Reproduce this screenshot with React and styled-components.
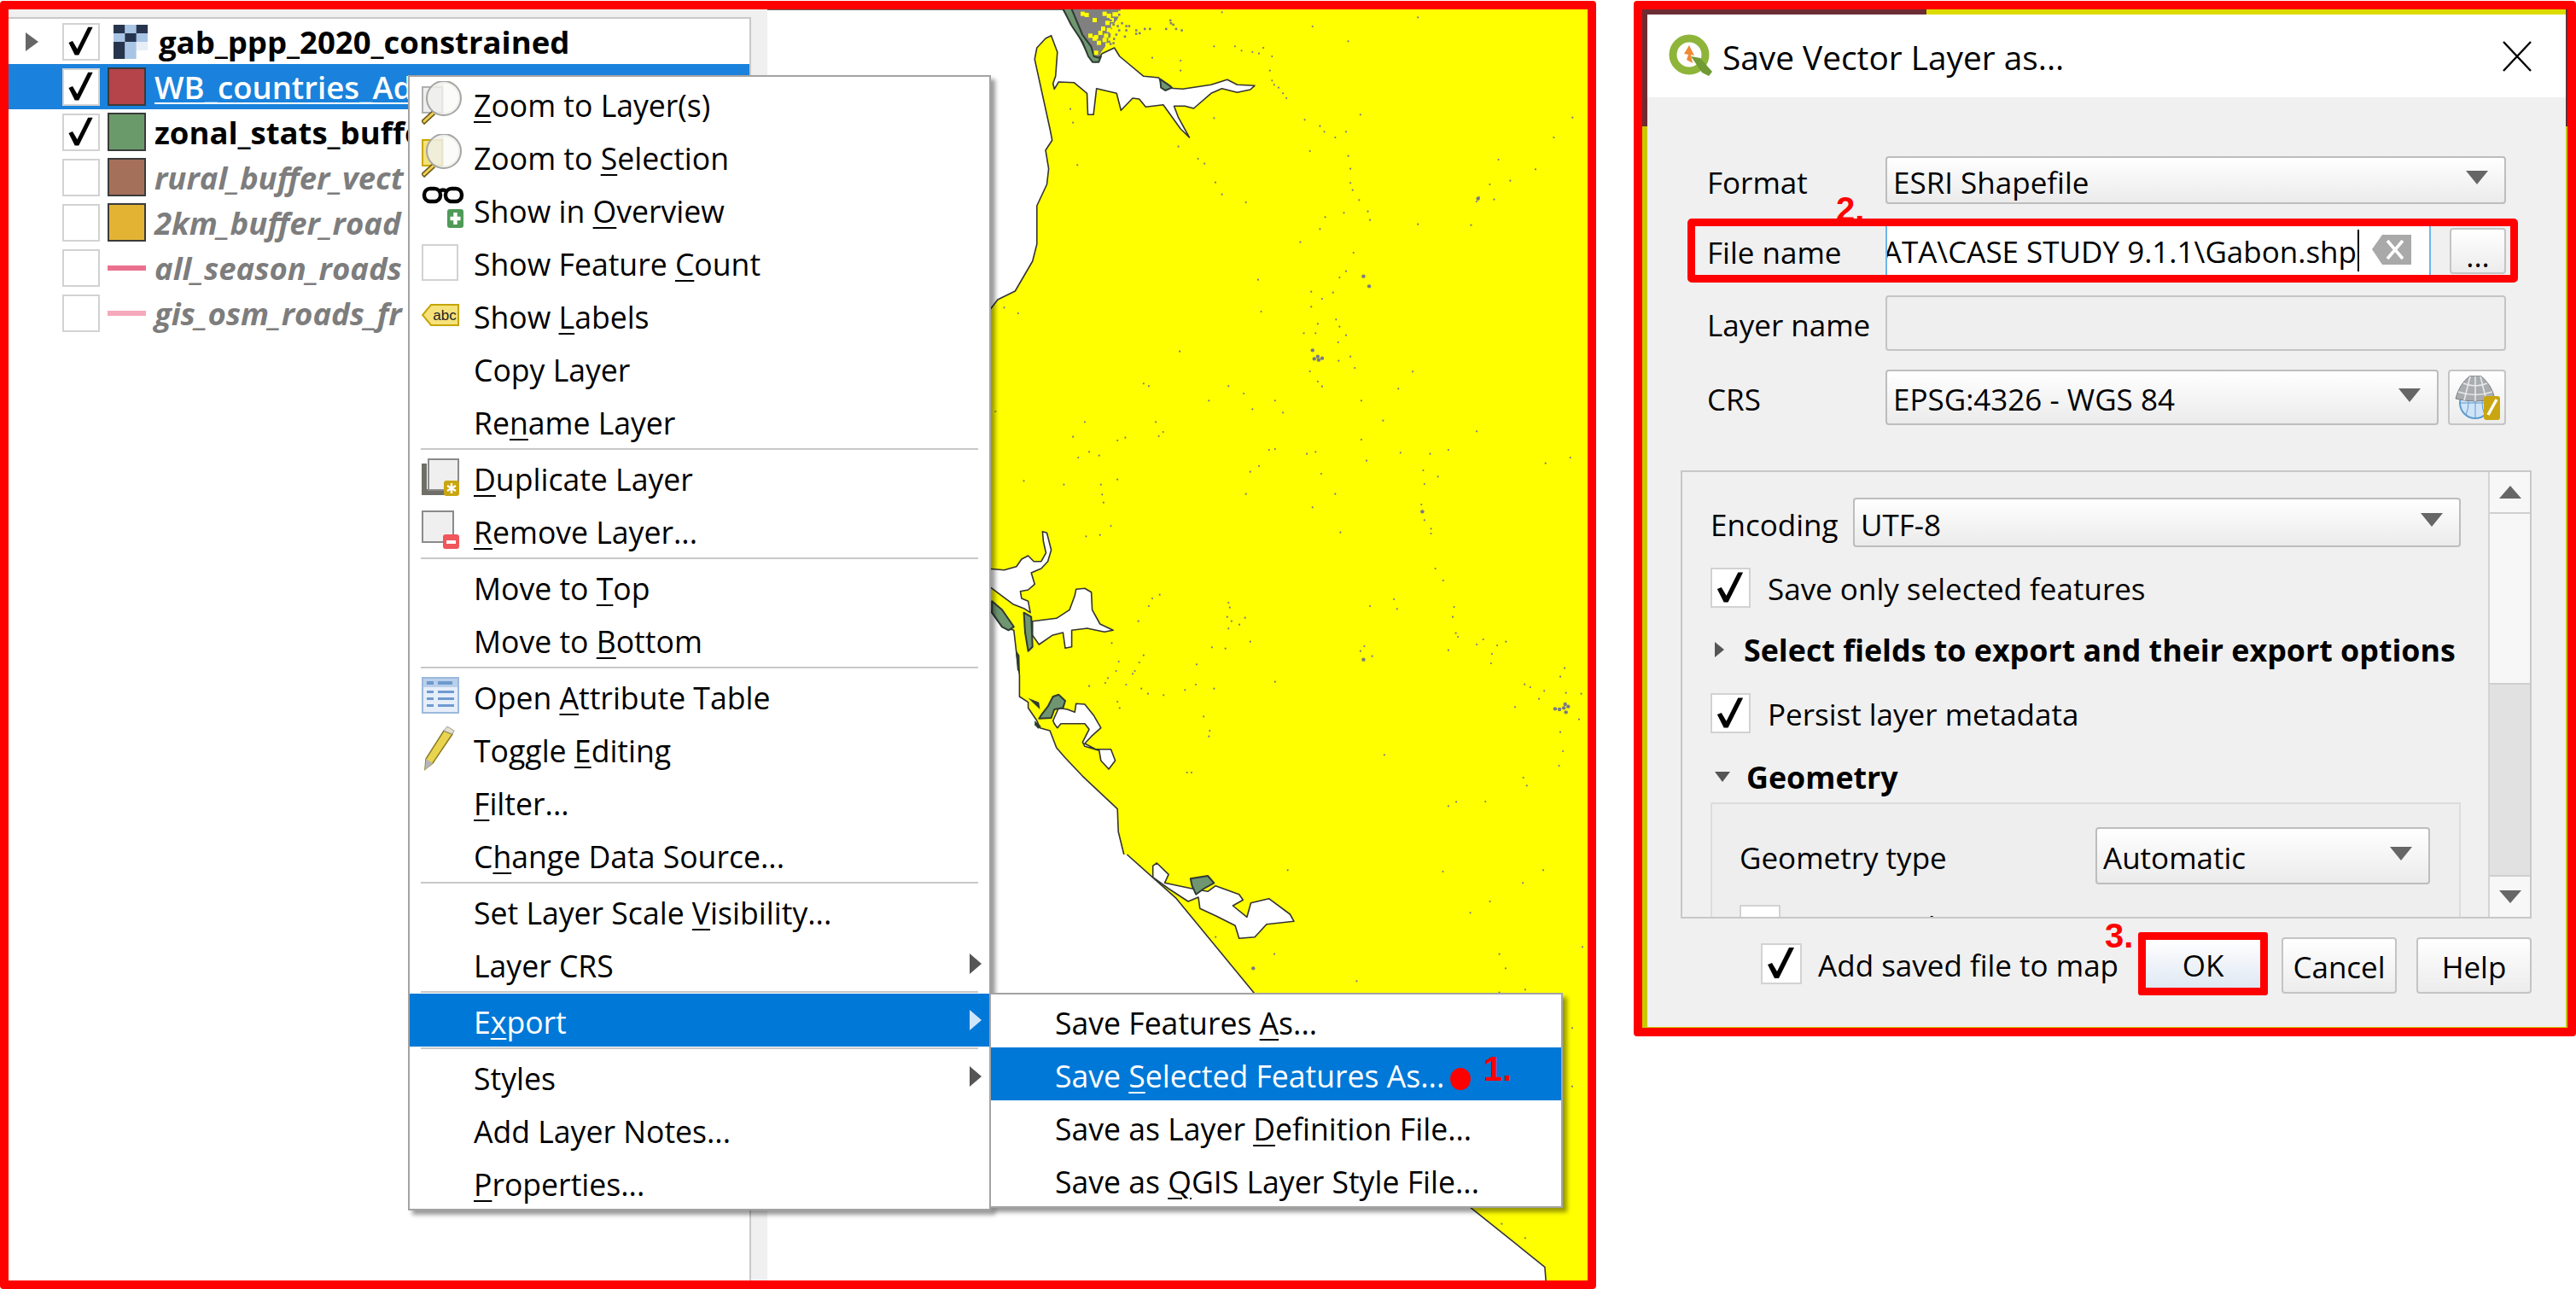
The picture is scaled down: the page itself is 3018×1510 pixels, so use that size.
import React from "react";
import styled, { createGlobalStyle } from "styled-components";

const UI_FONT = `"Open Sans", "Noto Sans", sans-serif`;

const GlobalStyle = createGlobalStyle`
  html, body { margin: 0; padding: 0; background: #fff; }
  body { font-family: ${UI_FONT}; color: #000; }
`;

const Page = styled.div`
  display: flex;
  align-items: flex-start;
  width: 3018px;
  height: 1510px;
  overflow: hidden;
  background: #fff;
`;

/* ---------- left panel ---------- */

const QgisFrame = styled.div`
  position: relative;
  box-sizing: border-box;
  display: flex;
  flex: none;
  width: 1870px;
  height: 1509px;
  margin-top: 1px;
  border: 10px solid #ff0000;
  border-radius: 4px;
`;

const TreeColumn = styled.div`
  display: flex;
  flex-direction: column;
  flex: none;
  width: 870px;
  padding-top: 9px;
  box-sizing: border-box;
  background: #f0f0f0;
`;

const TreeList = styled.div`
  flex: 1;
  background: #fff;
  border-top: 2px solid #c9c9c9;
  border-right: 2px solid #c9c9c9;
`;

const Splitter = styled.div`
  flex: none;
  width: 19px;
  background: #f0f0f0;
`;

const MapArea = styled.div`
  flex: 1;
  background: #fff;
  overflow: hidden;
  svg { display: block; }
`;

const TreeRow = styled.div`
  display: flex;
  align-items: center;
  height: 53px;
  padding-left: 63px;
  font-size: 36.5px;
  white-space: nowrap;
  overflow: hidden;
  background: ${(p) => (p.$selected ? "#1a82dc" : "transparent")};
  color: ${(p) => (p.$selected ? "#fff" : p.$off ? "#7d7d7d" : "#000")};
  font-weight: ${(p) => (p.$selected ? 600 : 700)};
  font-style: ${(p) => (p.$off ? "italic" : "normal")};
  text-decoration: ${(p) => (p.$selected ? "underline" : "none")};
  text-decoration-thickness: 2px;
  text-underline-offset: 4px;
`;

const TreeArrow = styled.span`
  position: relative;
  width: 0;
  height: 0;
  margin-left: -43px;
  margin-right: 28px;
  border-left: 15px solid #666;
  border-top: 11px solid transparent;
  border-bottom: 11px solid transparent;
`;

const Check = styled.span`
  display: inline-flex;
  align-items: center;
  justify-content: center;
  box-sizing: border-box;
  flex: none;
  width: ${(p) => p.$size || 44}px;
  height: ${(p) => p.$size || 44}px;
  background: #fff;
  border: 2px solid #d2d2d2;
`;

const Swatch = styled.span`
  flex: none;
  box-sizing: border-box;
  width: 45px;
  height: 45px;
  margin: 0 10px 0 9px;
  background: ${(p) => p.$color};
  border: 2px solid #3a3a3a;
`;

const LineSwatch = styled.span`
  flex: none;
  width: 45px;
  height: 6px;
  margin: 0 10px 0 9px;
  background: ${(p) => p.$color};
`;

const RasterWrap = styled.span`
  flex: none;
  display: inline-flex;
  margin: 0 13px 0 16px;
`;

/* ---------- context menu ---------- */

const Menu = styled.div`
  position: absolute;
  left: 468px;
  top: 77px;
  box-sizing: border-box;
  width: 683px;
  padding: 0;
  background: #fff;
  border: 2px solid #a3a3a3;
  box-shadow: 5px 5px 5px rgba(0, 0, 0, 0.4);
  font-size: 35.6px;
  z-index: 2;
`;

const SubMenu = styled(Menu)`
  left: 1149px;
  top: 1152px;
  width: 672px;
  z-index: 3;
`;

const MenuRow = styled.div`
  position: relative;
  display: flex;
  align-items: center;
  height: 62px;
  padding-left: ${(p) => (p.$sub ? 75 : 14)}px;
  white-space: nowrap;
  background: ${(p) => (p.$active ? "#0078d7" : "transparent")};
  color: ${(p) => (p.$active ? "#fff" : "#000")};
`;

const MenuIcon = styled.span`
  flex: none;
  display: inline-flex;
  align-items: center;
  width: 61px;
  height: 62px;
`;

const MenuText = styled.span`
  padding-top: 3px;
`;

const MenuSeparator = styled.div`
  height: 2px;
  margin: 1px 13px;
  background: #c8c8c8;
`;

const Mnemonic = styled.span`
  text-decoration: underline;
  text-decoration-thickness: 2px;
  text-underline-offset: 5px;
`;

const SubArrow = styled.span`
  position: absolute;
  right: 9px;
  top: 19px;
  width: 0;
  height: 0;
  border-left: 14px solid ${(p) => (p.$active ? "#cfe6fa" : "#555")};
  border-top: 12px solid transparent;
  border-bottom: 12px solid transparent;
`;

const RedDot = styled.span`
  position: absolute;
  left: 538px;
  top: 24px;
  width: 24px;
  height: 26px;
  border-radius: 50%;
  background: #ff0000;
`;

const StepNumber = styled.span`
  position: absolute;
  left: ${(p) => p.$x}px;
  top: ${(p) => p.$y}px;
  font-family: "Liberation Sans", Arial, sans-serif;
  font-weight: 700;
  font-size: 40px;
  line-height: 40px;
  letter-spacing: 0;
  color: #ff0000;
  z-index: 4;
`;

/* ---------- dialog ---------- */

const DialogFrame = styled.div`
  box-sizing: border-box;
  display: flex;
  flex-direction: column;
  flex: none;
  width: 1104px;
  height: 1213px;
  margin: 1px 0 0 44px;
  padding: 0 2px 0 0;
  border: 10px solid #ff0000;
  border-radius: 4px;
  background: linear-gradient(#6b2d33 0 137px, #c9c900 137px);
`;

const TopStrip = styled.div`
  flex: none;
  height: 6px;
  background: linear-gradient(90deg, #6b2d33 0 333px, #dcdc00 333px);
  border-bottom: 0;
`;

const DialogWindow = styled.div`
  flex: 1;
  display: flex;
  flex-direction: column;
  margin-left: 6px;
  margin-bottom: 1px;
  font-size: 35px;
  background: #f0f0f0;
`;

const TitleBar = styled.div`
  flex: none;
  display: flex;
  align-items: center;
  height: 97px;
  padding: 0 40px 0 24px;
  background: #fff;
`;

const TitleText = styled.span`
  flex: 1;
  margin-left: 11px;
  margin-top: 2px;
  font-size: 38.8px;
`;

const FormRow = styled.div`
  display: flex;
  align-items: center;
  height: ${(p) => p.$h}px;
  margin: ${(p) => p.$top}px 70px 0 70px;
`;

const FieldLabel = styled.span`
  flex: none;
  width: ${(p) => p.$w || 209}px;
  padding-top: 4px;
`;

const FileBox = styled.div`
  position: relative;
  box-sizing: border-box;
  display: flex;
  align-items: stretch;
  height: 75px;
  margin: 17px 56px 0 47px;
  padding: 0 5px 0 14px;
  border: 9px solid #ff0000;
  border-radius: 5px;
`;

const FileLabel = styled(FieldLabel)`
  align-self: center;
`;

const FileInput = styled.div`
  display: flex;
  align-items: center;
  justify-content: flex-end;
  box-sizing: border-box;
  flex: none;
  width: 639px;
  padding-right: 82px;
  overflow: hidden;
  white-space: nowrap;
  position: relative;
  background: #fff;
  border-left: 2px solid #6cb6ea;
  border-right: 2px solid #6cb6ea;
`;

const FileText = styled.span`
  flex: none;
  border-right: 2px solid #000;
  padding-right: 1px;
  padding-top: 2px;
`;

const ClearIcon = styled.span`
  position: absolute;
  right: 21px;
  top: 9px;
  display: inline-flex;
`;

const Combo = styled.div`
  box-sizing: border-box;
  display: flex;
  align-items: center;
  justify-content: space-between;
  flex: 1;
  height: 100%;
  padding: 4px 19px 0 7px;
  border: 2px solid #bdbdbd;
  border-radius: 4px;
  background: linear-gradient(#ffffff, #ebebeb);
  white-space: nowrap;
`;

const ComboArrow = styled.span`
  flex: none;
  width: 0;
  height: 0;
  margin-top: -10px;
  border-top: 16px solid #666;
  border-left: 13px solid transparent;
  border-right: 13px solid transparent;
`;

const TextBox = styled.div`
  flex: 1;
  box-sizing: border-box;
  height: 100%;
  border: 2px solid #c4c4c4;
  border-radius: 4px;
  background: #efefef;
`;

const SquareButton = styled.div`
  box-sizing: border-box;
  display: flex;
  align-items: ${(p) => (p.$dots ? "flex-end" : "center")};
  justify-content: center;
  flex: none;
  width: ${(p) => p.$w}px;
  height: ${(p) => p.$h || "100%"};
  margin-left: ${(p) => p.$ml}px;
  align-self: center;
  border: 2px solid #c4c4c4;
  border-radius: 4px;
  background: linear-gradient(#ffffff, #ececec);
  line-height: 30px;
  padding-bottom: ${(p) => (p.$dots ? 4 : 0)}px;
`;

const ScrollBox = styled.div`
  flex: none;
  box-sizing: border-box;
  display: flex;
  width: 997px;
  height: 525px;
  margin: 53px 0 0 39px;
  border: 2px solid #c8c8c8;
  overflow: hidden;
`;

const ScrollContent = styled.div`
  flex: 1;
  height: 1000px;
  padding: 30px 32px 0 33px;
`;

const FlowRow = styled.div`
  display: flex;
  align-items: center;
  height: ${(p) => p.$h}px;
  margin-top: ${(p) => p.$top || 0}px;
`;

const CheckLabel = styled.span`
  margin-left: ${(p) => p.$gap || 20}px;
  padding-top: 2px;
  white-space: nowrap;
`;

const SectionTitle = styled.span`
  margin-left: ${(p) => p.$gap}px;
  font-weight: 700;
  font-size: 35.8px;
  white-space: nowrap;
`;

const Caret = styled.span`
  flex: none;
  width: 0;
  height: 0;
  margin-left: 5px;
  ${(p) =>
    p.$open
      ? `
    border-top: 12px solid #555;
    border-left: 9px solid transparent;
    border-right: 9px solid transparent;
  `
      : `
    border-left: 11px solid #555;
    border-top: 9px solid transparent;
    border-bottom: 9px solid transparent;
    margin-right: 2px;
  `}
`;

const GroupBox = styled.div`
  box-sizing: border-box;
  height: 400px;
  margin-top: 5px;
  padding: 27px 34px 0 32px;
  border: 2px solid #dcdcdc;
  background: #eeeeee;
`;

const ScrollBar = styled.div`
  flex: none;
  display: flex;
  flex-direction: column;
  width: 47px;
  border-left: 2px solid #d4d4d4;
  background: #e1e1e1;
`;

const ScrollButton = styled.div`
  flex: none;
  display: flex;
  align-items: center;
  justify-content: center;
  height: 47px;
  background: #f7f7f7;
  border-${(p) => (p.$down ? "top" : "bottom")}: 2px solid #cfcfcf;
`;

const ScrollTriangle = styled.span`
  width: 0;
  height: 0;
  border-left: 13px solid transparent;
  border-right: 13px solid transparent;
  border-${(p) => (p.$down ? "top" : "bottom")}: 15px solid #666;
`;

const ScrollThumb = styled.div`
  flex: none;
  height: 198px;
  background: #f7f7f7;
  border-bottom: 2px solid #cfcfcf;
`;

const ScrollTrack = styled.div`
  flex: 1;
`;

const ButtonBar = styled.div`
  flex: none;
  display: flex;
  align-items: center;
  justify-content: flex-end;
  height: 74px;
  margin-top: 16px;
  padding-right: 40px;
`;

const DialogButton = styled.div`
  box-sizing: border-box;
  display: flex;
  align-items: center;
  justify-content: center;
  flex: none;
  width: 135px;
  height: 66px;
  margin-left: ${(p) => p.$ml}px;
  margin-top: 4px;
  padding-top: 3px;
  border: 2px solid #c4c4c4;
  border-radius: 4px;
  background: linear-gradient(#ffffff, #ececec);
`;

const OkButton = styled.div`
  position: relative;
  box-sizing: border-box;
  display: flex;
  align-items: center;
  justify-content: center;
  flex: none;
  width: 152px;
  height: 74px;
  margin-left: 23px;
  padding-top: 3px;
  border: 9px solid #ff0000;
  border-radius: 3px;
  background: linear-gradient(#ffffff, #dfe8f3);
`;

/* ---------- drawings ---------- */

const CheckMark = ({ size = 44 }) => (
  <svg width={size} height={size} viewBox="0 0 44 44">
    <path d="M6 23 L11 21 L17 31 L31 3 L37 3 L19 39 L14 39 Z" fill="#000" />
  </svg>
);

const Raster = () => {
  const dark = "#27344d";
  const light = "#a9c5e6";
  const cells = [
    [dark, light, dark],
    [light, dark, light],
    [dark, light, "#e8eef6"],
    [dark, light, "#ffffff"],
  ];
  return (
    <svg width="40" height="40" viewBox="0 0 3 4" preserveAspectRatio="none">
      {cells.map((row, r) =>
        row.map((c, i) => <rect key={`${r}-${i}`} x={i} y={r} width="1.02" height="1.02" fill={c} />)
      )}
    </svg>
  );
};

const Magnifier = ({ page }) => (
  <svg width="48" height="52" viewBox="0 0 48 52">
    <rect x="1" y="7" width="23" height="30" fill={page} stroke={page === "#f5e27a" ? "#c9a800" : "#b0b0b0"} strokeWidth="2" />
    <path d="M14 37 L1 49" stroke="#6b5a1e" strokeWidth="6" />
    <path d="M14 37 L2 48" stroke="#f0d050" strokeWidth="3" />
    <circle cx="26" cy="20" r="20" fill="#eeeeea" fillOpacity="0.85" stroke="#a5a5a5" strokeWidth="2" />
    <path d="M26 3 A17 17 0 0 1 26 37 Z" fill="#fff" fillOpacity="0.7" />
  </svg>
);

const Glasses = () => (
  <svg width="50" height="54" viewBox="0 0 50 54">
    <g fill="none" stroke="#000" strokeWidth="4.4">
      <rect x="3" y="3" width="19" height="15" rx="7" />
      <rect x="28" y="3" width="19" height="15" rx="7" />
      <path d="M21 6 Q25 3 29 6" />
    </g>
    <rect x="30" y="27" width="19" height="22" rx="3" fill="#4f9a58" />
    <path d="M39.5 31 V45 M33.5 38 H45.5" stroke="#fff" strokeWidth="4.4" />
  </svg>
);

const EmptyBox = () => <Check $size={43} />;

const LabelTag = () => (
  <svg width="44" height="26" viewBox="0 0 44 26">
    <path d="M11 1 H43 V25 H11 L1 13 Z" fill="#f6e27a" stroke="#c5a400" strokeWidth="2" />
    <text x="27" y="19" textAnchor="middle" fontFamily="'Liberation Sans', sans-serif" fontSize="17" fill="#222">abc</text>
  </svg>
);

const Duplicate = () => (
  <svg width="44" height="44" viewBox="0 0 44 44">
    <path d="M0 6 H6 V36 H36 V43 H0 Z" fill="#6f6f68" />
    <rect x="8" y="1" width="35" height="36" fill="#efefef" stroke="#8a8a8a" strokeWidth="2" />
    <rect x="26" y="26" width="18" height="18" rx="3" fill="#c9a610" />
    <path d="M35 29 V41 M30 32 L40 38 M40 32 L30 38" stroke="#fff" strokeWidth="2.4" />
  </svg>
);

const Remove = () => (
  <svg width="44" height="46" viewBox="0 0 44 46">
    <rect x="1" y="1" width="36" height="36" fill="#efefef" stroke="#8a8a8a" strokeWidth="2" />
    <rect x="25" y="28" width="19" height="17" rx="3" fill="#f0565c" />
    <rect x="29" y="35" width="11" height="4" fill="#fff" />
  </svg>
);

const TableIcon = () => (
  <svg width="44" height="44" viewBox="0 0 44 44">
    <rect x="1" y="1" width="42" height="41" fill="#e6eefa" stroke="#9cb9dd" strokeWidth="2" />
    <rect x="2" y="2" width="40" height="10" fill="#b9cfea" />
    <g fill="#6f9ad0">
      <rect x="6" y="5" width="8" height="4" />
      <rect x="19" y="5" width="17" height="4" />
      <rect x="6" y="16" width="8" height="3" />
      <rect x="19" y="16" width="19" height="3" />
      <rect x="6" y="24" width="8" height="3" />
      <rect x="19" y="24" width="19" height="3" />
      <rect x="6" y="32" width="8" height="3" />
      <rect x="19" y="32" width="19" height="3" />
    </g>
  </svg>
);

const Pencil = () => (
  <svg width="44" height="52" viewBox="0 0 44 52">
    <path d="M26 5 L36 9 L13 43 L4 50 L5 38 Z" fill="#e8d44f" stroke="#8a7a20" strokeWidth="1.5" />
    <path d="M26 5 L30 0 L38 5 L36 9 Z" fill="#e4e0c8" stroke="#999" />
    <path d="M5 38 L13 43 L4 51 Z" fill="#b5b5b5" />
  </svg>
);

const QgisLogo = () => (
  <svg width="53" height="51" viewBox="0 0 53 51">
    <circle cx="25" cy="24" r="19" fill="none" stroke="#8eb53a" strokeWidth="9" />
    <path d="M27 26 L40 45 L48 49 L52 44 L38 28 Z" fill="#6f9a34" />
    <path d="M25 13 L31 25 L27 24 L29 34 L22 30 L24 24 L19 23 Z" fill="#ee8a35" />
  </svg>
);

const CloseX = () => (
  <svg width="34" height="36" viewBox="0 0 34 36">
    <path d="M1 1 L33 35 M33 1 L1 35" stroke="#000" strokeWidth="2.4" />
  </svg>
);

const ClearGlyph = () => (
  <svg width="46" height="37" viewBox="0 0 46 37">
    <path d="M12 1 H46 V36 H12 L0 18 Z" fill="#a9a9a9" />
    <path d="M18 8 L36 29 M36 8 L18 29" stroke="#fff" strokeWidth="3.6" />
  </svg>
);

const GlobeIcon = () => (
  <svg width="54" height="52" viewBox="0 0 54 52">
    <circle cx="25" cy="32" r="18" fill="#cfe4f7" stroke="#5f9bd0" strokeWidth="2" />
    <path d="M7 32 H43 M25 14 V50 M14 18 Q20 32 14 46 M36 18 Q30 32 36 46" stroke="#5f9bd0" fill="none" />
    <path d="M2 27 Q6 10 19 0 H31 Q44 10 48 27 Q25 33 2 27 Z" fill="#a9adb0" stroke="#7c7f82" />
    <path d="M19 1 L12 29 M31 1 L38 29 M25 1 V30 M5 19 Q25 26 45 19 M11 9 Q25 15 39 9" stroke="#e8e8e8" strokeWidth="1.6" fill="none" />
    <rect x="35" y="24" width="19" height="28" rx="3" fill="#c9a610" />
    <path d="M40 46 L50 28" stroke="#fff" strokeWidth="3.4" />
  </svg>
);

/* zoom-crop coordinates of the coast, mapped back to the page */
const z6 = ([X, Y]) => [1100 + X / 1.96, Y / 3];
const z7 = ([X, Y]) => [1100 + X / 1.96, 500 + Y / 3];
const z3 = ([X, Y]) => [460 + X / 1.089, 1000 + Y / 3];
const z8 = ([X, Y]) => [1200 + X / 3, 10 + Y / 3];
const pts = (map, list) => list.map((p) => map(p).map((n) => n.toFixed(1)).join(",")).join(" ");
const rows = (flat) => {
  const out = [];
  for (let i = 0; i < flat.length; i += 2) out.push([flat[i], flat[i + 1]]);
  return out;
};

const SEA_NORTH = rows([
  285,30, 320,120, 345,195, 360,215, 375,185, 403,165, 415,195, 470,265, 505,270, 515,305, 560,310, 625,295, 662,277,
  685,295, 725,298, 715,312, 685,322, 650,308, 625,325, 585,378, 565,370, 540,370, 550,410, 575,480, 555,450, 515,365,
  475,373, 460,345, 445,342, 418,385, 408,325, 362,308, 355,400, 342,400, 340,325, 310,287, 275,285, 265,310, 262,290,
  268,265, 272,180, 258,122, 245,132, 225,165, 220,205, 255,450, 260,490, 245,525, 252,590, 248,645, 225,720, 225,855,
  215,915, 175,1020, 135,1050, 110,1100, -420,1100, -420,30,
]);

const SEA_WEST = rows([
  110,495, 150,500, 178,488, 190,462, 205,450, 218,470, 235,470, 246,440, 240,400, 238,365, 248,370, 258,430, 250,470,
  235,495, 212,510, 220,550, 205,570, 187,575, 190,600, 205,610, 210,650, 195,635, 170,620, 122,565, 110,555,
]);

const LAGOON_MID = rows([
  215,680, 270,670, 300,640, 312,590, 315,568, 335,565, 350,578, 352,640, 370,690, 400,712, 380,718, 340,705, 305,712,
  305,770, 290,775, 285,720, 260,730, 230,762, 215,730,
]);

const COAST_SOUTH = rows([
  110,620, 122,650, 145,700, 172,712, 178,790, 185,870, 185,945, 205,965, 205,985, 225,1030, 232,1055, 255,1065,
  270,1125, 290,1160, 330,1225, 410,1340, 412,1420, 425,1500, -420,1500, -420,620,
]);

const LAGOON_SOUTH = rows([
  265,1040, 262,1030, 275,985, 295,990, 312,1000, 315,970, 335,972, 355,1010, 372,1055, 350,1085, 335,1110, 360,1130,
  395,1130, 405,1170, 390,1200, 372,1170, 368,1135, 335,1120, 330,1105, 345,1060, 335,1040, 280,1040, 272,1055,
]);

const COAST_LOW = rows([
  937,0, 1000,155, 1100,490, 1375,1240, 1470,1450, 1472,1520, 300,1520, 300,0,
]);

const LAGOON_LOW = rows([
  975,30, 990,70, 985,100, 1020,120, 1040,130, 1050,110, 1080,140, 1085,160, 1072,180, 1090,220, 1095,170, 1118,155,
  1145,210, 1150,235, 1115,245, 1100,290, 1080,295, 1075,250, 1050,215, 1030,190, 1028,150, 1015,165, 990,120, 970,80, 970,40,
]);

const DOTS_A = rows([
  650,40, 1100,58, 858,90, 940,142, 632,160, 680,160, 745,165, 695,175, 720,180, 735,185, 765,195, 555,210, 555,245, 760,245,
  490,200, 765,280, 770,295, 780,305, 790,325, 798,342, 840,418, 875,440, 885,460, 910,480, 935,460, 968,400, 1455,410, 1412,480,
  550,512, 852,528, 940,545, 945,590, 595,555, 610,572, 318,577, 1285,558, 1370,592, 1312,632, 1265,645, 1240,690, 1235,705,
  1275,698, 635,638, 650,680, 705,708, 945,640, 950,665, 965,700, 985,740, 990,770, 887,760, 930,745, 875,802, 830,848, 1100,785,
  1222,788, 952,885, 935,950, 920,972, 733,980, 975,968, 988,1003, 855,1022, 880,1047, 905,1025, 855,1075, 740,1092, 150,1078,
  182,1098, 870,1135, 912,1120, 920,1145, 838,1168, 865,1168, 935,1175, 917,1200, 553,1232, 945,1250, 918,1265, 955,1290, 852,1302,
  1088,1303, 870,1338, 880,1355, 470,1345, 482,1354, 665,1354, 1055,1363, 700,1380, 620,1405, 772,1405, 970,1405, 720,1435, 790,1447,
  130,1443, 335,1480, 498,1480, 1020,1475, 302,380, 308,428, 632,412,
]);

const DOTS_B = rows([
  308,32, 410,45, 428,35, 515,15, 505,30, 970,42, 1235,13, 345,85, 320,105, 368,98, 758,78, 772,75, 845,92, 865,85, 1060,88, 1128,92,
  1170,78, 1393,125, 1450,105, 982,116, 715,155, 735,135, 878,162, 1112,150, 1146,172, 410,182, 195,187, 287,200, 372,200, 1115,198,
  375,235, 705,233, 910,233, 378,263, 858,280, 1112,295, 1108,270, 1115,325, 395,345, 1130,355, 1130,372, 922,368, 370,377, 338,382,
  1140,495, 1158,537, 490,600, 507,587, 665,615, 668,632, 482,627, 990,627, 1045,603, 1052,637, 1183,630, 1180,665, 662,665, 672,680,
  690,692, 703,668, 665,706, 458,680, 397,757, 715,752, 1187,722, 1192,735, 1250,744, 1235,762, 1282,765, 1302,752, 627,772, 658,776,
  977,768, 968,785, 975,815, 995,803, 1170,782, 1270,795, 1268,828, 470,800, 460,825, 413,822, 592,832, 407,855, 450,855, 445,865,
  1437,845, 1427,875, 388,880, 772,893, 382,897, 345,908, 430,903, 590,903, 1345,902, 1358,912, 465,917, 632,917, 565,922, 480,935,
  516,940, 1390,925, 1440,932, 1475,935, 1378,953, 410,963, 415,985, 1323,982, 608,1015, 1470,1025, 622,1065, 620,1085, 1427,1070,
  1433,1137, 1023,1150, 1424,1188, 570,1212, 580,1212, 1342,1230, 1350,1258, 1188,1315, 1170,1330, 1255,1314,
]);

const DOTS_C = rows([
  1340,60, 1442,100, 1468,55, 1142,55, 1400,165, 1375,205, 1518,325, 1125,350, 1412,350, 1098,400, 1420,400, 1230,445, 1445,475,
  1412,485, 1505,610, 1505,815, 1050,290, 1415,1298, 1445,1348,
]);

const BLOBS = [
  ...[[870,1250],[862,1258],[880,1256],[858,1228],[872,1262]].map(z6),
  ...[[988,1003],[975,968],[1238,695]].map(z6),
  ...[[1435,985],[1425,990],[1445,980],[1440,1000],[1415,988],[1438,972],[975,815],[1110,295]].map(z7),
  ...[[1098,400]].map(z3),
];

const HILLS_GREY = rows([
  165,-5, 340,-5, 335,20, 310,60, 300,110, 270,150, 262,170, 245,165, 235,130, 205,90,
]);

const HILLS_YELLOW = rows([
  198,8, 212,12, 240,30, 275,8, 290,15, 225,85, 240,95, 260,75, 280,85, 300,70, 295,100, 245,145, 275,100, 310,10, 320,10, 300,30,
  285,40, 322,42, 315,60, 305,50, 270,60, 290,65, 330,5, 255,110, 285,118, 245,90,
]);

const HILLS_SPECKS = rows([
  300,35, 320,30, 330,15, 310,50, 325,55, 340,45, 355,55, 365,55, 330,70, 355,70, 390,70, 420,65, 438,65, 495,65, 510,35, 520,50,
  530,65, 550,70, 390,82, 402,80, 350,92, 295,110, 312,100, 320,85, 512,45, 300,118, 310,115,
]);

const COAST_STROKE = "#333";

const GabonMap = () => (
  <svg width="961" height="1489" viewBox="899 10 961 1489">
    <rect x="899" y="10" width="961" height="1489" fill="#ffff00" />
    <polygon points={pts(z7, COAST_SOUTH)} fill="#fff" />
    <polygon points={pts(z3, COAST_LOW)} fill="#fff" />
    <g stroke={COAST_STROKE} strokeWidth="1.6" strokeLinejoin="round">
      <polygon points={pts(z6, SEA_NORTH)} fill="#fff" />
      <polygon points={pts(z7, SEA_WEST)} fill="#fff" />
      <polygon points={pts(z7, LAGOON_MID)} fill="#fff" />
      <polyline points={pts(z7, COAST_SOUTH.slice(0, -2))} fill="none" />
      <polygon points={pts(z7, LAGOON_SOUTH)} fill="#fff" />
      <polyline points={pts(z3, COAST_LOW.slice(0, -2))} fill="none" />
      <polygon points={pts(z3, LAGOON_LOW)} fill="#fff" />
    </g>
    <polygon points={pts(z8, HILLS_GREY)} fill="#808080" />
    <g fill="#6f9670" stroke="#2f3a33" strokeWidth="2" strokeLinejoin="round">
      <polygon points={pts(z8, [[135,-5],[165,-5],[205,90],[235,130],[245,165],[262,170],[270,165],[262,185],[240,185],[225,165],[205,115],[165,55]])} />
      <polygon points={pts(z6, [[508,275],[530,298],[535,305],[520,315],[510,305]])} />
      <polygon points={pts(z7, [[122,610],[145,640],[172,700],[160,712],[145,700],[122,650]])} />
      <polygon points={pts(z7, [[195,650],[212,665],[215,770],[205,785],[198,720]])} />
      <polygon points={pts(z7, [[262,945],[275,938],[290,960],[285,985],[265,990],[258,1020],[230,1022],[235,1010],[250,980]])} />
      <polygon points={pts(z3, [[1018,85],[1040,75],[1048,100],[1035,120],[1025,140],[1020,110]])} />
    </g>
    <g fill="#2f3a33">
      <polygon points={pts(z7, [[176,780],[185,800],[186,868],[180,850]])} />
      <polygon points={pts(z7, [[205,950],[230,965],[232,990],[215,965]])} />
      <polygon points={pts(z7, [[220,1030],[235,1050],[228,1058],[220,1045]])} />
    </g>
    <g fill="#ffff00">
      {HILLS_YELLOW.map(z8).map(([x, y], i) => <rect key={i} x={x} y={y} width="5" height="5" />)}
    </g>
    <g fill="#7a7a86">
      {HILLS_SPECKS.map(z8).map(([x, y], i) => <rect key={i} x={x} y={y} width="2.5" height="2.5" />)}
      {DOTS_A.map(z6).map(([x, y], i) => <circle key={`a${i}`} cx={x} cy={y} r="1.1" />)}
      {DOTS_B.map(z7).map(([x, y], i) => <circle key={`b${i}`} cx={x} cy={y} r="1.1" />)}
      {DOTS_C.map(z3).map(([x, y], i) => <circle key={`c${i}`} cx={x} cy={y} r="1.1" />)}
      {BLOBS.map(([x, y], i) => <circle key={`d${i}`} cx={x} cy={y} r="2.2" />)}
    </g>
  </svg>
);

/* ---------- data ---------- */

const LAYERS = [
  { name: "gab_ppp_2020_constrained", on: true, raster: true, arrow: true },
  { name: "WB_countries_Ad", on: true, color: "#b5434a", selected: true },
  { name: "zonal_stats_buffe", on: true, color: "#6b9a6a" },
  { name: "rural_buffer_vect", color: "#a5705a", off: true },
  { name: "2km_buffer_road", color: "#e3b334", off: true },
  { name: "all_season_roads", line: "#e9718f", off: true },
  { name: "gis_osm_roads_fr", line: "#f5a9bb", off: true },
];

const sep = { separator: true };

const MENU = [
  { label: "_Zoom to Layer(s)", icon: <Magnifier page="#eeeeee" /> },
  { label: "Zoom to _Selection", icon: <Magnifier page="#f5e27a" /> },
  { label: "Show in _Overview", icon: <Glasses /> },
  { label: "Show Feature _Count", icon: <EmptyBox /> },
  { label: "Show _Labels", icon: <LabelTag /> },
  { label: "Copy Layer" },
  { label: "Re_name Layer" },
  sep,
  { label: "_Duplicate Layer", icon: <Duplicate /> },
  { label: "_Remove Layer...", icon: <Remove /> },
  sep,
  { label: "Move to _Top" },
  { label: "Move to _Bottom" },
  sep,
  { label: "Open _Attribute Table", icon: <TableIcon /> },
  { label: "Toggle _Editing", icon: <Pencil /> },
  { label: "_Filter..." },
  { label: "C_hange Data Source..." },
  sep,
  { label: "Set Layer Scale _Visibility..." },
  { label: "Layer CRS", arrow: true },
  sep,
  { label: "E_xport", arrow: true, active: true },
  sep,
  { label: "Styles", arrow: true },
  { label: "Add Layer Notes..." },
  { label: "_Properties..." },
];

const SUBMENU = [
  { label: "Save Features _As..." },
  { label: "Save _Selected Features As...", active: true, marked: true },
  { label: "Save as Layer _Definition File..." },
  { label: "Save as _QGIS Layer Style File..." },
];

const Label = ({ text }) => {
  const at = text.indexOf("_");
  if (at < 0) return <MenuText>{text}</MenuText>;
  return (
    <MenuText>
      {text.slice(0, at)}
      <Mnemonic>{text[at + 1]}</Mnemonic>
      {text.slice(at + 2)}
    </MenuText>
  );
};

const QgisWindow = () => (
  <QgisFrame>
    <TreeColumn>
      <TreeList>
        {LAYERS.map((l) => (
          <TreeRow key={l.name} $selected={l.selected} $off={l.off}>
            {l.arrow && <TreeArrow />}
            <Check>{l.on && <CheckMark />}</Check>
            {l.raster && <RasterWrap><Raster /></RasterWrap>}
            {l.color && <Swatch $color={l.color} />}
            {l.line && <LineSwatch $color={l.line} />}
            <span>{l.name}</span>
          </TreeRow>
        ))}
      </TreeList>
    </TreeColumn>
    <Splitter />
    <MapArea>
      <GabonMap />
    </MapArea>
    <Menu>
      {MENU.map((m, i) =>
        m.separator ? (
          <MenuSeparator key={i} />
        ) : (
          <MenuRow key={m.label} $active={m.active}>
            <MenuIcon>{m.icon}</MenuIcon>
            <Label text={m.label} />
            {m.arrow && <SubArrow $active={m.active} />}
          </MenuRow>
        )
      )}
    </Menu>
    <SubMenu>
      {SUBMENU.map((m) => (
        <MenuRow key={m.label} $sub $active={m.active}>
          <Label text={m.label} />
          {m.marked && <RedDot />}
          {m.marked && <StepNumber $x={577} $y={5}>1.</StepNumber>}
        </MenuRow>
      ))}
    </SubMenu>
  </QgisFrame>
);

const SaveDialog = () => (
  <DialogFrame>
    <TopStrip />
    <DialogWindow>
      <TitleBar>
        <QgisLogo />
        <TitleText>Save Vector Layer as...</TitleText>
        <CloseX />
      </TitleBar>

      <FormRow $top={69} $h={56}>
        <FieldLabel>Format</FieldLabel>
        <Combo>ESRI Shapefile<ComboArrow /></Combo>
      </FormRow>

      <FileBox>
        <StepNumber $x={165} $y={-40}>2.</StepNumber>
        <FileLabel>File name</FileLabel>
        <FileInput>
          <FileText>ATA\CASE STUDY 9.1.1\Gabon.shp</FileText>
          <ClearIcon><ClearGlyph /></ClearIcon>
        </FileInput>
        <SquareButton $w={66} $h="54px" $ml={22} $dots>...</SquareButton>
      </FileBox>

      <FormRow $top={15} $h={65}>
        <FieldLabel>Layer name</FieldLabel>
        <TextBox />
      </FormRow>

      <FormRow $top={22} $h={65}>
        <FieldLabel>CRS</FieldLabel>
        <Combo>EPSG:4326 - WGS 84<ComboArrow /></Combo>
        <SquareButton $w={68} $ml={11}><GlobeIcon /></SquareButton>
      </FormRow>

      <ScrollBox>
        <ScrollContent>
          <FlowRow $h={58}>
            <FieldLabel $w={167}>Encoding</FieldLabel>
            <Combo>UTF-8<ComboArrow /></Combo>
          </FlowRow>
          <FlowRow $h={47} $top={24}>
            <Check $size={47}><CheckMark size={46} /></Check>
            <CheckLabel>Save only selected features</CheckLabel>
          </FlowRow>
          <FlowRow $h={50} $top={24}>
            <Caret />
            <SectionTitle $gap={21}>Select fields to export and their export options</SectionTitle>
          </FlowRow>
          <FlowRow $h={47} $top={26}>
            <Check $size={47}><CheckMark size={46} /></Check>
            <CheckLabel>Persist layer metadata</CheckLabel>
          </FlowRow>
          <FlowRow $h={50} $top={26}>
            <Caret $open />
            <SectionTitle $gap={19}>Geometry</SectionTitle>
          </FlowRow>
          <GroupBox>
            <FlowRow $h={67}>
              <FieldLabel $w={417}>Geometry type</FieldLabel>
              <Combo>Automatic<ComboArrow /></Combo>
            </FlowRow>
            <FlowRow $h={48} $top={24}>
              <Check $size={48} />
              <CheckLabel>Force multi-type</CheckLabel>
            </FlowRow>
          </GroupBox>
        </ScrollContent>
        <ScrollBar>
          <ScrollButton><ScrollTriangle /></ScrollButton>
          <ScrollThumb />
          <ScrollTrack />
          <ScrollButton $down><ScrollTriangle $down /></ScrollButton>
        </ScrollBar>
      </ScrollBox>

      <ButtonBar>
        <Check $size={48}><CheckMark size={46} /></Check>
        <CheckLabel $gap={19}>Add saved file to map</CheckLabel>
        <OkButton>
          <StepNumber $x={-48} $y={-25}>3.</StepNumber>
          OK
        </OkButton>
        <DialogButton $ml={16}>Cancel</DialogButton>
        <DialogButton $ml={23}>Help</DialogButton>
      </ButtonBar>
    </DialogWindow>
  </DialogFrame>
);

export default function App() {
  return (
    <>
      <GlobalStyle />
      <Page>
        <QgisWindow />
        <SaveDialog />
      </Page>
    </>
  );
}
